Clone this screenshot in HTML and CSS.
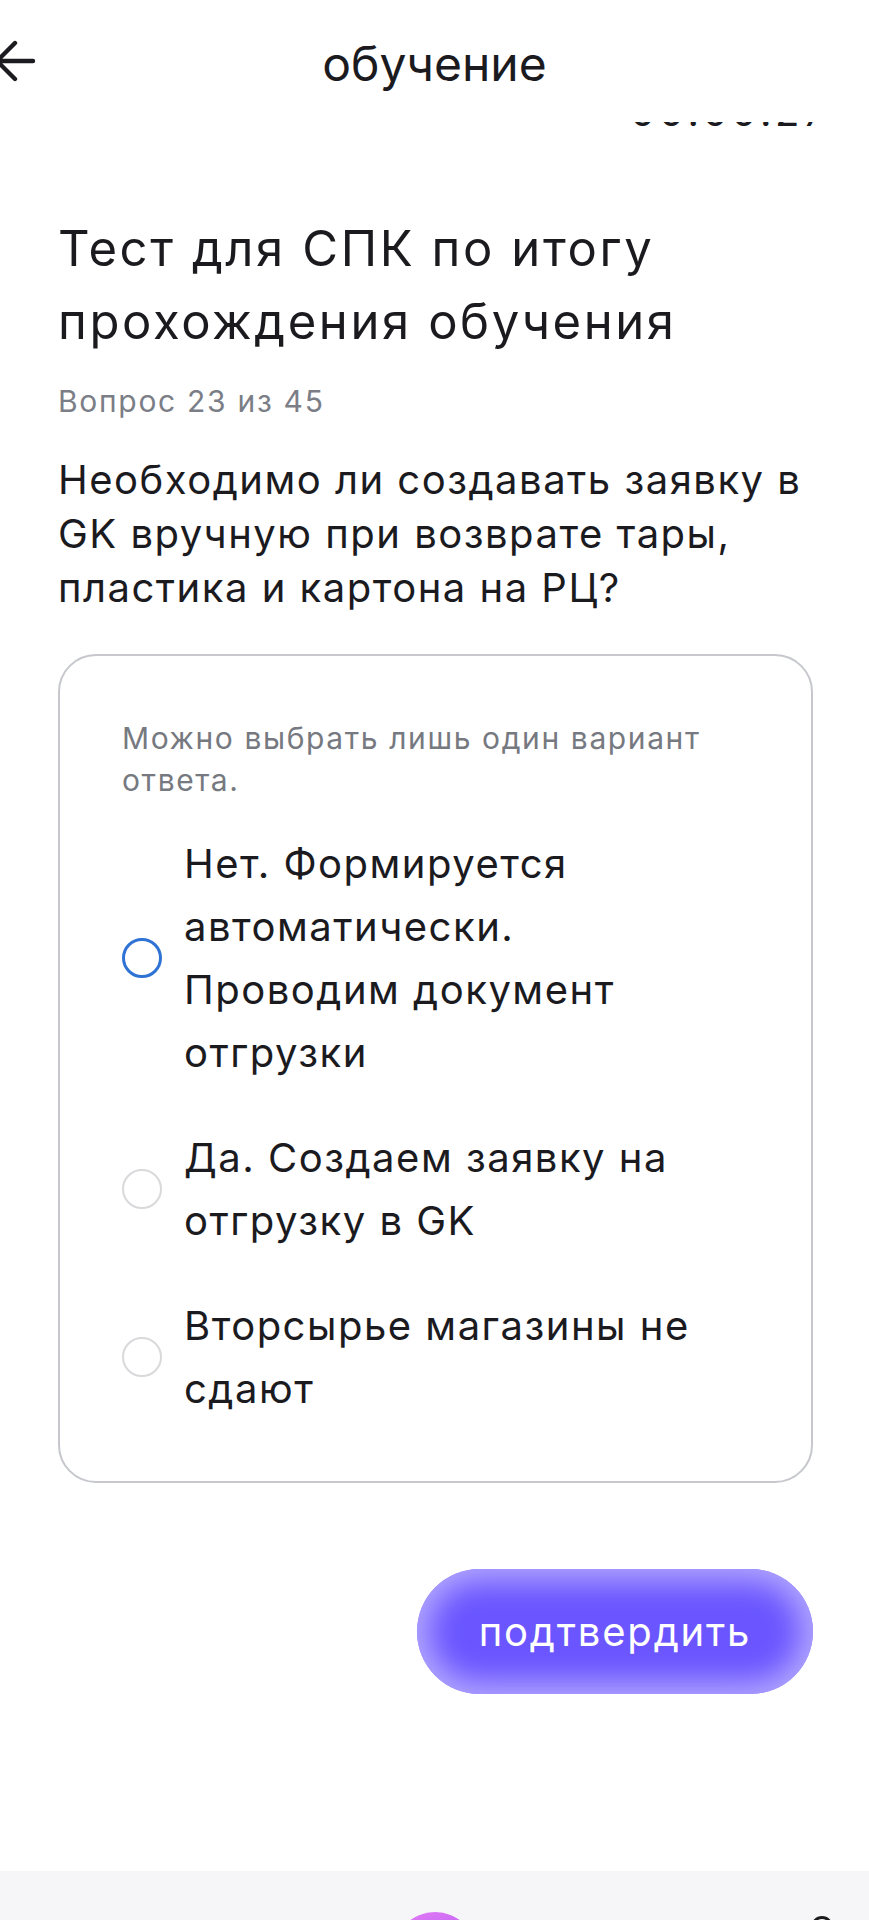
FILE: index.html
```html
<!DOCTYPE html>
<html lang="ru">
<head>
<meta charset="utf-8">
<title>обучение</title>
<link rel="stylesheet" href="styles.css">
</head>
<body>
<header class="topbar">
  <svg class="back" viewBox="0 0 40 42" width="40" height="42" aria-hidden="true">
    <path d="M-3 21 H33 M-3 21 L15 3 M-3 21 L15 39" fill="none" stroke="#1c1c20" stroke-width="4.4" stroke-linecap="round" stroke-linejoin="round"/>
  </svg>
  <div class="topbar-title">обучение</div>
  <span class="topbar-spacer"></span>
</header>
<div class="timer-clip"><span class="timer">00:00:27</span></div>
<main class="content">
  <h1 class="test-title">Тест для СПК по итогу прохождения обучения</h1>
  <div class="counter">Вопрос 23 из 45</div>
  <p class="question">Необходимо ли создавать заявку в GK вручную при возврате тары, пластика и картона на РЦ?</p>
  <section class="card">
    <p class="hint">Можно выбрать лишь один вариант ответа.</p>
    <ul class="options">
      <li class="option">
        <span class="radio radio-active"></span>
        <span class="option-text">Нет. Формируется автоматически. Проводим документ отгрузки</span>
      </li>
      <li class="option">
        <span class="radio"></span>
        <span class="option-text">Да. Создаем заявку на отгрузку в GK</span>
      </li>
      <li class="option">
        <span class="radio"></span>
        <span class="option-text">Вторсырье магазины не сдают</span>
      </li>
    </ul>
  </section>
  <div class="actions">
    <button class="confirm" type="button">подтвердить</button>
  </div>
</main>
<footer class="tabbar">
  <span class="tab-center"></span>
  <span class="tab-right"></span>
</footer>
</body>
</html>
```

FILE: styles.css
```css
* { box-sizing: border-box; }
html, body { margin: 0; padding: 0; }
body {
  background: #ffffff;
  color: #1b1b1f;
  font-family: "Inter", "Roboto", sans-serif;
  min-height: 1920px;
  display: flex;
  flex-direction: column;
}

.topbar {
  display: grid;
  grid-template-columns: 1fr auto 1fr;
  align-items: start;
  padding-top: 34px;
  height: 122px;
}
.back {
  display: block;
  margin-top: 6px;
}
.topbar-title {
  font-size: 48px;
  line-height: 60px;
  color: #1b1b1f;
}

.timer-clip {
  height: 6px;
  overflow: hidden;
  display: flex;
  justify-content: flex-end;
  padding-right: 40px;
}
.timer {
  font-size: 40px;
  line-height: 40px;
  margin-top: -30px;
  letter-spacing: 3.5px;
  color: #1b1b1f;
}

.content {
  padding: 0 56px 0 58px;
}
.test-title {
  margin: 84px 0 0;
  font-size: 49px;
  line-height: 73px;
  font-weight: 400;
  letter-spacing: 2.6px;
  color: #1b1b1f;
}
.counter {
  margin-top: 23px;
  font-size: 30px;
  line-height: 40px;
  letter-spacing: 1.7px;
  color: #7b7e86;
}
.question {
  margin: 32px 0 0;
  font-size: 40px;
  line-height: 54px;
  letter-spacing: 1.5px;
  color: #1b1b1f;
}

.card {
  margin-top: 39px;
  border: 2px solid #c6c8cd;
  border-radius: 38px;
  padding: 61px 88px 61px 62px;
}
.hint {
  margin: 0;
  font-size: 30px;
  line-height: 42px;
  letter-spacing: 1.6px;
  color: #76797f;
}
.options {
  list-style: none;
  margin: 31px 0 0;
  padding: 0;
  display: flex;
  flex-direction: column;
  gap: 42px;
}
.option {
  display: flex;
  align-items: center;
  gap: 22px;
}
.radio {
  flex: 0 0 40px;
  width: 40px;
  height: 40px;
  border-radius: 50%;
  border: 2.5px solid #d9d9dc;
}
.radio-active {
  border: 3px solid #2f73d4;
}
.option-text {
  font-size: 40px;
  line-height: 63px;
  letter-spacing: 1.5px;
  color: #1b1b1f;
}

.actions {
  display: flex;
  justify-content: flex-end;
  margin-top: 86px;
}
.confirm {
  width: 396px;
  height: 125px;
  border: none;
  border-radius: 63px;
  background: #6a55ff;
  box-shadow: inset 0 0 30px 12px rgba(182, 172, 255, 0.95);
  color: #ffffff;
  font-family: "Inter", "Roboto", sans-serif;
  font-size: 40px;
  letter-spacing: 1.8px;
  padding: 0;
}

.tabbar {
  margin-top: auto;
  height: 49px;
  background: #f6f6f8;
  overflow: hidden;
  display: flex;
  justify-content: center;
  position: relative;
}
.tab-center {
  margin-top: 41px;
  width: 84px;
  height: 84px;
  border-radius: 50%;
  background: linear-gradient(160deg, #e47cf6 0%, #b45cf2 60%, #8e55ee 100%);
}
.tab-right {
  position: absolute;
  right: 36px;
  top: 45px;
  width: 22px;
  height: 22px;
  border-radius: 50%;
  border: 3px solid #1b1b1f;
}
```
